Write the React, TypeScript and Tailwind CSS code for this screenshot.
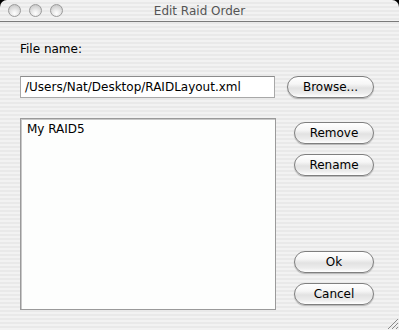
import React from "react";

const font = { fontFamily: '"DejaVu Sans", "Liberation Sans", sans-serif' };

function AquaButton({ label, w }: { label: string; w: string }) {
  return (
    <div
      className={`${w} h-[22px] rounded-full border border-[#7f7f7f] bg-[linear-gradient(to_bottom,#ffffff_0%,#f6f6f6_35%,#e2e2e2_55%,#ececec_80%,#ffffff_100%)] shadow-[0_1px_1px_rgba(0,0,0,0.25)] flex items-center justify-center text-[12px] text-black leading-none`}
    >
      {label}
    </div>
  );
}

function Light() {
  return (
    <div className="w-[13px] h-[13px] rounded-full border border-[#9a9a9a] bg-[radial-gradient(circle_at_50%_75%,#ffffff_0%,#e4e4e4_45%,#bdbdbd_100%)]" />
  );
}

export default function App() {
  return (
    <div className="w-[399px] h-[330px] bg-black" style={font}>
      <div className="w-full h-full rounded-t-[7px] overflow-hidden flex flex-col bg-[repeating-linear-gradient(to_bottom,#f2f2f2_0px,#f2f2f2_2px,#e9e9e9_2px,#e9e9e9_4px)]">
        <div className="h-[21px] grid grid-cols-[1fr_auto_1fr] items-center">
          <div className="flex items-center gap-[8px] pl-[8px] pt-[0px]">
            <Light />
            <Light />
            <Light />
          </div>
          <div className="text-[12px] text-[#555555] leading-none">Edit Raid Order</div>
          <div />
        </div>
        <div className="h-px bg-[#7a7a7a]" />
        <div className="flex-1 flex flex-col pl-[20px]">
          <div className="mt-[20px] h-[15px] text-[12px] leading-[15px] text-black">File name:</div>
          <div className="mt-[19px] flex items-center">
            <div className="w-[255px] h-[22px] bg-white border border-[#a8a8a8] border-t-[#8c8c8c] flex items-center pl-[4px] text-[12px] text-black">
              /Users/Nat/Desktop/RAIDLayout.xml
            </div>
            <div className="ml-[12px]">
              <AquaButton label="Browse..." w="w-[87px]" />
            </div>
          </div>
          <div className="mt-[20px] flex">
            <div className="w-[256px] h-[192px] bg-[#fdfefd] border border-[#9a9a9a] shadow-[inset_1px_1px_0_#c8c8c8] px-[6px] pt-[3px] text-[12px] leading-[15px] text-black">
              My RAID5
            </div>
            <div className="ml-[18px] flex flex-col pt-[4px] pb-[5px]">
              <AquaButton label="Remove" w="w-[80px]" />
              <div className="h-[10px]" />
              <AquaButton label="Rename" w="w-[80px]" />
              <div className="flex-1" />
              <AquaButton label="Ok" w="w-[80px]" />
              <div className="h-[10px]" />
              <AquaButton label="Cancel" w="w-[80px]" />
            </div>
          </div>
          <div className="flex-1 flex justify-end items-end pr-[1px] pb-[1px]">
            <svg width="11" height="11" viewBox="0 0 11 11">
              <line x1="1" y1="11" x2="11" y2="1" stroke="#8a8a8a" strokeWidth="1" />
              <line x1="5" y1="11" x2="11" y2="5" stroke="#8a8a8a" strokeWidth="1" />
              <line x1="9" y1="11" x2="11" y2="9" stroke="#8a8a8a" strokeWidth="1" />
            </svg>
          </div>
        </div>
      </div>
    </div>
  );
}
